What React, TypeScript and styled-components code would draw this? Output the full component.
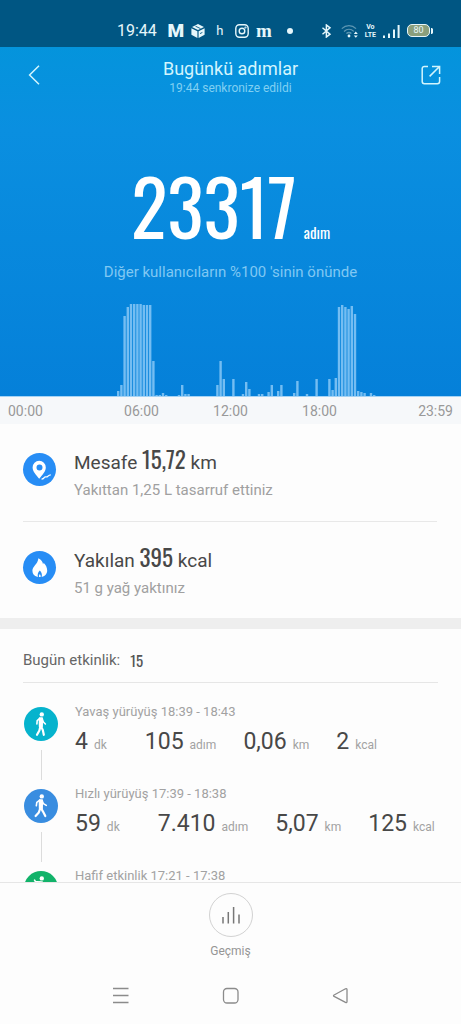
import React from 'react';
import styled, { createGlobalStyle } from 'styled-components';

const GlobalStyle = createGlobalStyle`
  * { box-sizing: border-box; }
  body { margin: 0; background: #fdfdfd; font-family: Roboto, "Noto Sans", sans-serif; }
  h1, h2, p, ul { margin: 0; padding: 0; font-weight: 400; }
  button { border: 0; padding: 0; background: none; font: inherit; color: inherit; cursor: pointer; }
  svg { display: block; flex: none; }
`;

const condensed = `Oswald, "Roboto Condensed", "Liberation Sans Narrow", "DejaVu Sans Condensed", sans-serif`;

const Screen = styled.div`
  display: flex;
  flex-direction: column;
  height: 100vh;
  overflow: hidden;
`;

const StatusBar = styled.div`
  display: flex;
  align-items: center;
  justify-content: space-between;
  flex: none;
  height: 47px;
  padding: 14px 28px 0 117px;
  background: #005683;
  color: #e6f7fb;
`;

const StatusGroup = styled.div<{ $gap: number }>`
  display: flex;
  align-items: center;
  gap: ${(p) => p.$gap}px;
`;

const Clock = styled.time`
  margin-right: 4px;
  font-size: 16px;
  line-height: 20px;
`;

const Letter = styled.span<{ $size: number; $serif?: boolean; $weight?: number }>`
  display: flex;
  justify-content: center;
  width: 14px;
  font-family: ${(p) => (p.$serif ? '"Liberation Serif", serif' : 'Roboto, sans-serif')};
  font-size: ${(p) => p.$size}px;
  font-weight: ${(p) => p.$weight ?? 400};
  line-height: 20px;
`;

const Dot = styled.span`
  width: 6px;
  height: 6px;
  margin-left: 8px;
  border-radius: 50%;
  background: currentColor;
`;

const VoLte = styled.span`
  display: flex;
  flex-direction: column;
  align-items: center;
  font-size: 7px;
  font-weight: 700;
  line-height: 8px;
`;

const Battery = styled.span`
  width: 23px;
  height: 13px;
  border: 1px solid #e6f7fb;
  border-radius: 5px;
  background: #8a9f7c;
  font-size: 9px;
  line-height: 11px;
  text-align: center;
`;

const Hero = styled.section`
  flex: none;
  background: linear-gradient(#0494dc, #0a8fe0 24%, #0580d9);
  color: #fff;
`;

const Header = styled.header`
  display: grid;
  grid-template-columns: 60px 1fr 60px;
  align-items: center;
  height: 56px;
  text-align: center;
`;

const IconButton = styled.button`
  display: flex;
  justify-content: center;
`;

const BackButton = styled(IconButton)`
  padding-left: 8px;
`;

const Heading = styled.div`
  padding-top: 4px;
`;

const Title = styled.h1`
  font-size: 18px;
  line-height: 22px;
  color: #d3f5fd;
`;

const SyncNote = styled.p`
  font-size: 12px;
  line-height: 16px;
  color: #80d0f2;
`;

const StepTotal = styled.p`
  display: flex;
  align-items: baseline;
  justify-content: center;
  gap: 7px;
  padding-top: 60px;
  font-family: ${condensed};
`;

const StepNumber = styled.strong`
  font-size: 76px;
  font-weight: 400;
  line-height: 84px;
`;

const StepUnit = styled.span`
  font-size: 15px;
`;

const Rank = styled.p`
  padding-top: 15px;
  text-align: center;
  font-size: 15px;
  line-height: 20px;
  color: #80c8f3;
`;

const Chart = styled.svg`
  width: 100%;
  height: 94px;
  margin-top: 21px;
`;

const Axis = styled.div`
  display: grid;
  grid-template-columns: 89px 1fr 1fr 1fr 89px;
  flex: none;
  padding: 1px 8px 0;
  background: #f6f8fa;
  font-size: 14px;
  line-height: 26px;
  text-align: center;
  color: #999;

  & > :first-child { text-align: left; }
  & > :last-child { text-align: right; }
`;

const Summary = styled.section`
  flex: none;
  padding: 0 24px 0 23px;
`;

const SummaryRow = styled.div`
  display: flex;
  align-items: flex-start;
  gap: 18px;
  height: 97px;
  padding-top: 18px;

  & + & { border-top: 1px solid #e8e8e8; }
`;

const Disc = styled.span<{ $color: string; $size: number }>`
  display: flex;
  flex: none;
  align-items: center;
  justify-content: center;
  width: ${(p) => p.$size}px;
  height: ${(p) => p.$size}px;
  border-radius: 50%;
  background: ${(p) => p.$color};
  color: #fff;
`;

const SummaryDisc = styled(Disc)`
  margin-top: 11px;
`;

const SummaryTitle = styled.h2`
  font-size: 19px;
  line-height: 34px;
  color: #484848;
`;

const SummaryValue = styled.span`
  font-family: ${condensed};
  font-size: 23px;
  line-height: 34px;
`;

const SummaryNote = styled.p`
  font-size: 15px;
  line-height: 20px;
  color: #a0a0a0;
`;

const Band = styled.div`
  flex: none;
  height: 11px;
  background: #eee;
`;

const Activities = styled.section`
  flex: 1;
  min-height: 0;
  overflow: hidden;
  padding: 0 23px;
`;

const ActivitiesTitle = styled.h2`
  display: flex;
  align-items: center;
  gap: 10px;
  height: 54px;
  padding-top: 8px;
  border-bottom: 1px solid #e6e6e6;
  font-size: 15px;
  color: #666;
`;

const ActivitiesCount = styled.span`
  font-family: ${condensed};
  font-size: 15px;
  color: #555;
`;

const ActivityList = styled.ul`
  padding: 21px 0 0 1px;
  list-style: none;
`;

const Activity = styled.li`
  display: flex;
  gap: 17px;
  height: 82px;
`;

const Track = styled.div`
  display: flex;
  flex-direction: column;
  align-items: center;
  gap: 9px;
  padding-top: 3px;

  &::after { content: ""; width: 1px; height: 30px; background: #dcdcdc; }
`;

const ActivityName = styled.p`
  font-size: 13px;
  line-height: 16px;
  color: #a2a2a2;
`;

const Stats = styled.p`
  display: flex;
  align-items: baseline;
  gap: 27px;
  padding-top: 8px;
  white-space: nowrap;
`;

const Stat = styled.span`
  display: flex;
  align-items: baseline;
  gap: 6px;
  font-size: 23px;
  line-height: 28px;
  color: #484848;

  &:first-child { padding-right: 11px; }
`;

const Unit = styled.span`
  font-size: 12px;
  color: #a2a2a2;
`;

const BottomBar = styled.footer`
  display: flex;
  justify-content: center;
  flex: none;
  height: 86px;
  padding-top: 10px;
  border-top: 1px solid #e6e6e6;
`;

const HistoryButton = styled.button`
  display: flex;
  flex-direction: column;
  align-items: center;
  gap: 6px;
  font-size: 12px;
  line-height: 16px;
  color: #959595;
`;

const HistoryRing = styled.span`
  display: flex;
  align-items: center;
  justify-content: center;
  width: 44px;
  height: 44px;
  border: 1px solid #d2d2d2;
  border-radius: 50%;
`;

const SystemNav = styled.nav`
  display: flex;
  justify-content: center;
  gap: 86px;
  flex: none;
  height: 56px;
  color: #8b8b8b;
`;

/* Ten-minute step buckets: [slot of the day, height]. */
const buckets: [number, number][] = [
  [36, 5], [37, 11], [38, 80], [39, 89], [40, 92], [41, 92], [42, 92], [43, 92], [44, 91],
  [45, 91], [46, 91], [47, 35], [48, 1], [49, 1], [50, 3], [51, 1], [55, 1], [56, 11], [57, 2],
  [58, 2], [67, 11], [68, 35], [69, 17], [72, 17], [75, 2], [76, 14], [77, 7], [80, 2], [81, 2],
  [83, 4], [84, 11], [86, 5], [87, 11], [91, 3], [92, 15], [95, 2], [98, 17], [102, 17],
  [103, 6], [104, 18], [105, 89], [106, 91], [107, 89], [108, 87], [109, 90], [110, 82],
  [111, 5], [112, 4], [113, 3], [115, 3], [116, 1],
];

const StepChart = () => (
  <Chart viewBox="0 0 461 94" preserveAspectRatio="none" role="img" aria-label="Adımlar">
    {buckets.map(([slot, h]) => (
      <rect key={slot} x={slot * 3.2 + 1.8} y={93 - h} width="2.4" height={h} fill="#74bdf2" />
    ))}
    <rect y="93" width="461" height="1" fill="#a5d3f5" />
  </Chart>
);

type Pose = 'stroll' | 'walk' | 'run';

const limbs: Record<Pose, { arms: string; legs: string }> = {
  stroll: {
    arms: 'M15.8 11.4 13.2 13.6 12.9 17M18 11.6 19.4 15 21.4 17',
    legs: 'M16.3 19.5 15.4 23.5 13 27.8M17 19.5 18.8 23 19.8 27.8',
  },
  walk: {
    arms: 'M15.8 11.2 12.8 13.4 12.3 16.8M18 11.6 19.4 14.6 22.3 16.4',
    legs: 'M16.2 19.5 14.8 23.4 11.6 27M17.2 19.5 19 22.6 21.3 27',
  },
  run: {
    arms: 'M16 11 11.4 10.6 10.6 9.2M18 11.6 20.4 14.6 23.3 13',
    legs: 'M15.4 19.5 14 23.4 9.6 25M16.4 19.5 19.4 22 19.3 27',
  },
};

const Figure = ({ pose }: { pose: Pose }) => (
  <svg width="34" height="34" viewBox="0 0 34 34" fill="none" stroke="currentColor" strokeLinecap="round" strokeLinejoin="round">
    <circle cx="17.8" cy="7.4" r="2.2" fill="currentColor" stroke="none" />
    <path d="M15.8 11.4h2.2l-.2 8h-1.9z" fill="currentColor" strokeWidth="2.2" />
    <path d={limbs[pose].arms} strokeWidth="1.6" />
    <path d={limbs[pose].legs} strokeWidth="2.2" />
  </svg>
);

const activities: { name: string; color: string; pose: Pose; stats: [string, string][] }[] = [
  {
    name: 'Yavaş yürüyüş 18:39 - 18:43', color: '#06b3cd', pose: 'stroll',
    stats: [['4', 'dk'], ['105', 'adım'], ['0,06', 'km'], ['2', 'kcal']],
  },
  {
    name: 'Hızlı yürüyüş 17:39 - 18:38', color: '#398de0', pose: 'walk',
    stats: [['59', 'dk'], ['7.410', 'adım'], ['5,07', 'km'], ['125', 'kcal']],
  },
  { name: 'Hafif etkinlik 17:21 - 17:38', color: '#12b36a', pose: 'run', stats: [] },
];

export default function App() {
  return (
    <Screen>
      <GlobalStyle />
      <StatusBar>
        <StatusGroup $gap={8}>
          <Clock>19:44</Clock>
          <Letter $size={19} $weight={900}>M</Letter>
          <svg width="14" height="14" viewBox="0 0 14 14">
            <path d="M7 0l6 3-6 3-6-3zM.4 4.2l6 3V14l-6-3.2zM13.6 4.2l-6 3V14l6-3.2z" fill="currentColor" />
            <path d="M4.5 2.2l5 2.4M9 9.6l2.4-1.2" stroke="#005683" strokeWidth=".9" />
          </svg>
          <Letter $size={13}>h</Letter>
          <svg width="14" height="14" viewBox="0 0 14 14" fill="none" stroke="currentColor" strokeWidth="1.4">
            <rect x=".8" y=".8" width="12.4" height="12.4" rx="3.6" />
            <circle cx="7" cy="7" r="2.8" />
            <circle cx="10.5" cy="3.5" r=".4" />
          </svg>
          <Letter $size={19} $serif $weight={700}>m</Letter>
          <Dot />
        </StatusGroup>
        <StatusGroup $gap={7}>
          <svg width="13" height="14" viewBox="0 0 13 14" fill="none" stroke="currentColor" strokeWidth="1.5">
            <path d="M1.5 3.8 9 10.2 5.4 13V1L9 3.8 1.5 10.2" />
          </svg>
          <svg width="17" height="14" viewBox="0 0 17 14" fill="none" stroke="currentColor" strokeWidth="1.3">
            <path d="M.8 4.6C5 .6 11 .6 15 4.6M3 7.4c3-2.8 7-2.8 9.8 0" opacity=".4" />
            <path d="M5.4 9.6c1.5-1.3 3.6-1.3 5 0" opacity=".4" />
            <circle cx="8" cy="12" r="1.4" fill="currentColor" stroke="none" />
            <path d="M12.8 10 14.8 7.6 16.8 10zM12.8 11.4l2 2.4 2-2.4z" fill="currentColor" stroke="none" />
          </svg>
          <VoLte><span>Vo</span><span>LTE</span></VoLte>
          <svg width="17" height="14" viewBox="0 0 17 14" fill="currentColor">
            <path d="M0 11.5h2V14H0zM5 9.5h2V14H5zM10 5.5h2V14h-2zM14.6 1h2v13h-2z" />
          </svg>
          <StatusGroup $gap={1}>
            <Battery>80</Battery>
            <svg width="2" height="6" viewBox="0 0 2 6"><path d="M0 0h1l1 1v4L1 6H0z" fill="currentColor" /></svg>
          </StatusGroup>
        </StatusGroup>
      </StatusBar>

      <Hero>
        <Header>
          <BackButton aria-label="Geri">
            <svg width="12" height="20" viewBox="0 0 12 20" fill="none" stroke="#d3f5fd" strokeWidth="1.5">
              <path d="M11 .8 1.6 10 11 19.2" />
            </svg>
          </BackButton>
          <Heading>
            <Title>Bugünkü adımlar</Title>
            <SyncNote>19:44 senkronize edildi</SyncNote>
          </Heading>
          <IconButton aria-label="Paylaş">
            <svg width="20" height="20" viewBox="0 0 20 20" fill="none" stroke="#d3f5fd" strokeWidth="1.5">
              <path d="M7 1.4H3.4A2.2 2.2 0 0 0 1.2 3.6V16.6A2.2 2.2 0 0 0 3.4 18.8h13a2.2 2.2 0 0 0 2.2-2.2V12M8.6 11.4 18 2M11 1.4h7.6V9" />
            </svg>
          </IconButton>
        </Header>
        <StepTotal>
          <StepNumber>23317</StepNumber>
          <StepUnit>adım</StepUnit>
        </StepTotal>
        <Rank>Diğer kullanıcıların %100 'sinin önünde</Rank>
        <StepChart />
      </Hero>
      <Axis>
        <span>00:00</span><span>06:00</span><span>12:00</span><span>18:00</span><span>23:59</span>
      </Axis>

      <Summary>
        <SummaryRow>
          <SummaryDisc $color="#278df5" $size={33}>
            <svg width="33" height="33" viewBox="0 0 33 33">
              <path fillRule="evenodd" d="M16.2 7.8a6.6 6.6 0 0 0-6.6 6.6c0 4.2 3.8 7.6 6.6 11.4 2.8-3.8 6.6-7.2 6.6-11.4a6.6 6.6 0 0 0-6.6-6.6zm.3 3.6a3 3 0 1 1 0 6 3 3 0 0 1 0-6z" fill="currentColor" />
              <path d="M18.6 26c1.6.2 2.2-.6 2.8-1.6s1.8-.2 2.8-.6 1.2-2 3.6-2" fill="none" stroke="currentColor" strokeWidth="1.3" />
            </svg>
          </SummaryDisc>
          <div>
            <SummaryTitle>Mesafe <SummaryValue>15,72</SummaryValue> km</SummaryTitle>
            <SummaryNote>Yakıttan 1,25 L tasarruf ettiniz</SummaryNote>
          </div>
        </SummaryRow>
        <SummaryRow>
          <SummaryDisc $color="#278df5" $size={33}>
            <svg width="33" height="33" viewBox="0 0 33 33">
              <path d="M15.4 7.2c3 1.6 4.4 3.6 4.6 6 .4-.4.6-.8.6-1.4 2.2 2 3.6 5 3.6 7.8 0 3.4-2.4 5.8-5 6.2-1.6.3-3.6.3-5 0-2.8-.6-4.8-2.8-4.8-6 0-4.8 5.4-6.4 6-12.6z" fill="currentColor" />
              <path d="M16.8 19.4c1.6 1.6 2.6 3.8 1.9 6.6h-1.1c.2-1.2-.2-2.2-.8-3-.6.8-1 1.8-.8 3h-1.1c-.7-2.8.3-5 1.9-6.6z" fill="#278df5" />
            </svg>
          </SummaryDisc>
          <div>
            <SummaryTitle>Yakılan <SummaryValue>395</SummaryValue> kcal</SummaryTitle>
            <SummaryNote>51 g yağ yaktınız</SummaryNote>
          </div>
        </SummaryRow>
      </Summary>
      <Band />

      <Activities>
        <ActivitiesTitle>Bugün etkinlik: <ActivitiesCount>15</ActivitiesCount></ActivitiesTitle>
        <ActivityList>
          {activities.map((a) => (
            <Activity key={a.name}>
              <Track>
                <Disc $color={a.color} $size={34}><Figure pose={a.pose} /></Disc>
              </Track>
              <div>
                <ActivityName>{a.name}</ActivityName>
                <Stats>
                  {a.stats.map(([value, unit]) => (
                    <Stat key={unit}>{value}<Unit>{unit}</Unit></Stat>
                  ))}
                </Stats>
              </div>
            </Activity>
          ))}
        </ActivityList>
      </Activities>

      <BottomBar>
        <HistoryButton>
          <HistoryRing>
            <svg width="18" height="18" viewBox="0 0 18 18" stroke="#777" strokeWidth="1.5">
              <path d="M1 11v6.5M6.3 6v11.5M11.6 1v16.5M17 8.5v9" />
            </svg>
          </HistoryRing>
          Geçmiş
        </HistoryButton>
      </BottomBar>
      <SystemNav>
        <IconButton aria-label="Son uygulamalar">
          <svg width="24" height="56" viewBox="0 0 24 56" stroke="currentColor" strokeWidth="1.4">
            <path d="M4 20.5h15.5M4 27.5h15.5M4 34.5h15.5" />
          </svg>
        </IconButton>
        <IconButton aria-label="Ana ekran">
          <svg width="24" height="56" viewBox="0 0 24 56" fill="none" stroke="currentColor" strokeWidth="1.3">
            <rect x="4.5" y="20.5" width="14.5" height="14.5" rx="3.5" />
          </svg>
        </IconButton>
        <IconButton aria-label="Geri dön">
          <svg width="24" height="56" viewBox="0 0 24 56" fill="none" stroke="currentColor" strokeWidth="1.3" strokeLinejoin="round">
            <path d="M5.1 27 16.5 20.8q1.5-.6 1.5 1v11.6q0 1.6-1.5 1L5.1 28.4q-1.2-.7 0-1.4z" />
          </svg>
        </IconButton>
      </SystemNav>
    </Screen>
  );
}
